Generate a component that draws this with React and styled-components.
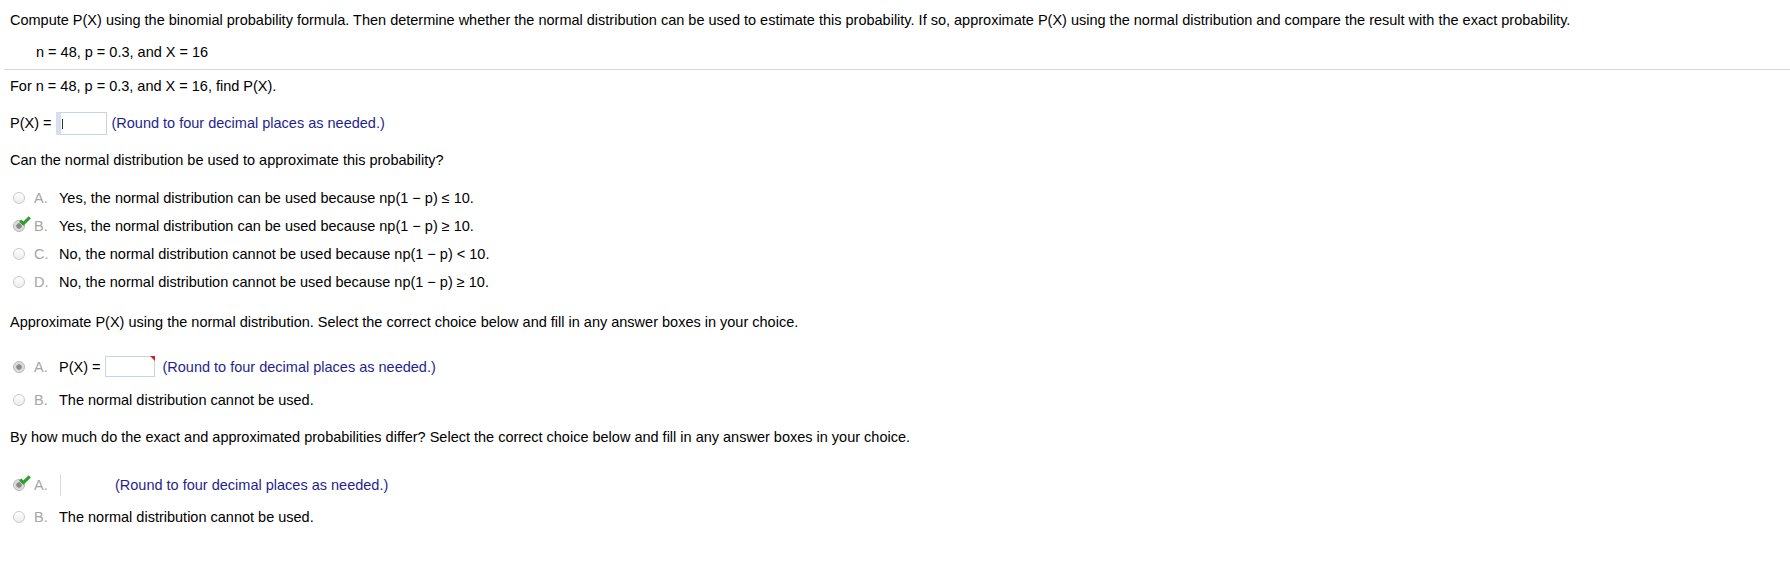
import React from "react";
import styled, { createGlobalStyle } from "styled-components";

const GlobalStyle = createGlobalStyle`
  html, body {
    margin: 0;
    padding: 0;
    background: #ffffff;
  }
  body {
    font-family: "Liberation Sans", Arial, sans-serif;
    font-size: 14.5px;
    color: #000;
  }
`;

const Page = styled.div`
  width: 1790px;
  height: 586px;
  padding-top: 11px;
  box-sizing: border-box;
  overflow: hidden;
`;

const Line = styled.div`
  line-height: 18px;
  padding-left: ${(p) => p.$indent || 10}px;
  margin-top: ${(p) => p.$top || 0}px;
  white-space: nowrap;
`;

const Divider = styled.hr`
  border: none;
  border-top: 1px solid #d3d7df;
  margin: 8px 0 0 4px;
`;

const AnswerRow = styled.div`
  display: flex;
  align-items: center;
  padding-left: 10px;
  margin-top: ${(p) => p.$top || 0}px;
  height: 24px;
  white-space: nowrap;
`;

const Hint = styled.span`
  color: #1f1f8f;
  margin-left: ${(p) => p.$gap || 5}px;
`;

const AnswerBox = styled.span`
  position: relative;
  display: inline-block;
  box-sizing: border-box;
  width: ${(p) => p.$w || 51}px;
  height: ${(p) => p.$h || 23}px;
  margin-left: ${(p) => p.$left || 4}px;
  border: 1px solid #c9d3e1;
  border-left: ${(p) => (p.$focus ? "5px solid #d5dff0" : "1px solid #c9d3e1")};
  background: #fff;

  ${(p) =>
    p.$focus &&
    `
    &::before {
      content: "";
      position: absolute;
      left: 1px;
      top: 6px;
      width: 1px;
      height: 10px;
      background: #333;
    }
  `}

  ${(p) =>
    p.$flag &&
    `
    &::after {
      content: "";
      position: absolute;
      right: -1px;
      top: -1px;
      width: 0;
      height: 0;
      border-top: 5px solid #cc2222;
      border-left: 5px solid transparent;
    }
  `}
`;

const CaretBox = styled.span`
  display: inline-block;
  width: 1px;
  height: 22px;
  background: #d3dae4;
  margin-left: 1px;
`;

const ChoiceList = styled.div`
  display: flex;
  flex-direction: column;
  margin-top: ${(p) => p.$top || 0}px;
`;

const Choice = styled.div`
  display: flex;
  align-items: center;
  height: ${(p) => p.$h || 28}px;
  padding-left: 13px;
  white-space: nowrap;
`;

const RadioWrap = styled.span`
  position: relative;
  display: inline-block;
  width: 12px;
  height: 12px;
  flex-shrink: 0;
`;

const RadioCircle = styled.span`
  display: block;
  box-sizing: border-box;
  width: 12px;
  height: 12px;
  border-radius: 50%;
  border: 1px solid ${(p) => (p.$checked ? "#b5b5b5" : "#cacaca")};
  background: ${(p) =>
    p.$checked
      ? "radial-gradient(circle, #8a8a8a 0 2.4px, #d4d4d4 3px, #f0f0f0 100%)"
      : "linear-gradient(#ffffff, #ececec)"};
`;

const Check = styled.svg`
  position: absolute;
  left: 6px;
  top: -4px;
  width: 12px;
  height: 10px;
`;

const Letter = styled.span`
  color: #a6a6a6;
  width: 25px;
  margin-left: 9px;
  flex-shrink: 0;
`;

const ChoiceText = styled.span`
  display: flex;
  align-items: center;
`;

function Radio({ checked, correct }) {
  return (
    <RadioWrap>
      <RadioCircle $checked={checked} />
      {correct && (
        <Check viewBox="0 0 12 10">
          <path d="M1.2 4.6 L4.4 7.6 L10.8 1.4" fill="none" stroke="#2f9e2a" strokeWidth="3.2" strokeLinecap="butt" />
        </Check>
      )}
    </RadioWrap>
  );
}

function Option({ letter, checked, correct, h, children }) {
  return (
    <Choice $h={h}>
      <Radio checked={checked} correct={correct} />
      <Letter>{letter}.</Letter>
      <ChoiceText>{children}</ChoiceText>
    </Choice>
  );
}

export default function App() {
  return (
    <>
      <GlobalStyle />
      <Page>
        <Line>
          Compute P(X) using the binomial probability formula. Then determine whether the normal distribution can be
          used to estimate this probability. If so, approximate P(X) using the normal distribution and compare the
          result with the exact probability.
        </Line>
        <Line $indent={36} $top={14}>
          n = 48, p = 0.3, and X = 16
        </Line>
        <Divider />
        <Line $top={7}>For n = 48, p = 0.3, and X = 16, find P(X).</Line>
        <AnswerRow $top={16}>
          P(X) =
          <AnswerBox $focus />
          <Hint>(Round to four decimal places as needed.)</Hint>
        </AnswerRow>

        <Line $top={16}>Can the normal distribution be used to approximate this probability?</Line>
        <ChoiceList $top={15}>
          <Option letter="A">Yes, the normal distribution can be used because np(1 − p) ≤ 10.</Option>
          <Option letter="B" checked correct>
            Yes, the normal distribution can be used because np(1 − p) ≥ 10.
          </Option>
          <Option letter="C">No, the normal distribution cannot be used because np(1 − p) &lt; 10.</Option>
          <Option letter="D">No, the normal distribution cannot be used because np(1 − p) ≥ 10.</Option>
        </ChoiceList>

        <Line $top={17}>
          Approximate P(X) using the normal distribution. Select the correct choice below and fill in any answer
          boxes in your choice.
        </Line>
        <ChoiceList $top={19}>
          <Option letter="A" checked h={33}>
            P(X) =
            <AnswerBox $w={50} $h={21} $flag />
            <Hint $gap={8}>(Round to four decimal places as needed.)</Hint>
          </Option>
          <Option letter="B" h={33}>
            The normal distribution cannot be used.
          </Option>
        </ChoiceList>

        <Line $top={12}>
          By how much do the exact and approximated probabilities differ? Select the correct choice below and fill in
          any answer boxes in your choice.
        </Line>
        <ChoiceList $top={23}>
          <Option letter="A" checked correct h={32}>
            <CaretBox />
            <Hint $gap={54}>(Round to four decimal places as needed.)</Hint>
          </Option>
          <Option letter="B" h={32}>
            The normal distribution cannot be used.
          </Option>
        </ChoiceList>
      </Page>
    </>
  );
}
